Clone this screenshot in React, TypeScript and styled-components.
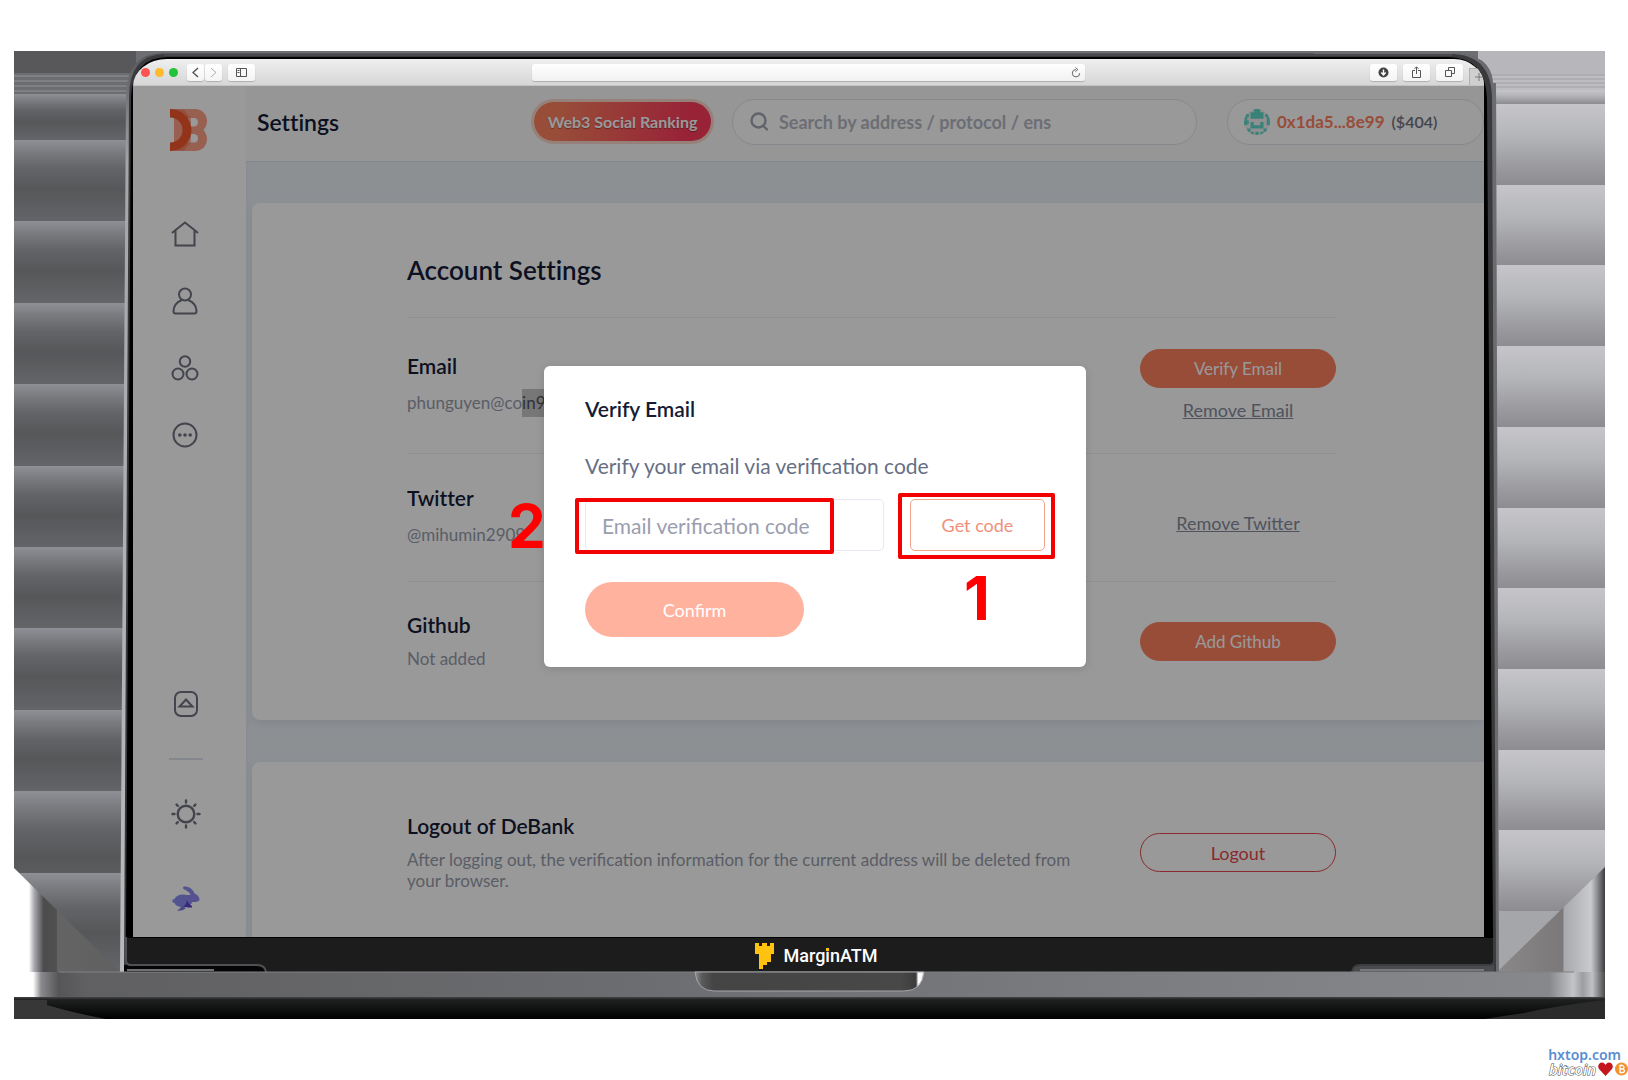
import React from "react";
import styled, { createGlobalStyle, css } from "styled-components";

const GlobalStyle = createGlobalStyle`
  *, *::before, *::after { box-sizing: border-box; }
  body { margin: 0; background: #fff; font-family: Lato, "Liberation Sans", sans-serif; }
  button, input { font: inherit; }
  h1, h2, h3, p { margin: 0; }
  h1, h2, h3 { font-variant-ligatures: none; }
`;

const ink = "#151b36";
const coral = "#fe815f";

const Page = styled.div`
  min-height: 100vh;
  display: flex;
  flex-direction: column;
  padding: 51px 23px 0 14px;
`;

const Laptop = styled.main`
  position: relative;
  flex: 1;
  display: flex;
  flex-direction: column;
  padding: 8px 121px 47px 119px;
`;

const Backdrop = styled.svg`
  position: absolute;
  inset: 0;
  width: 100%;
  height: 100%;
`;

const Screen = styled.div`
  position: relative;
  flex: 1;
  display: flex;
  flex-direction: column;
`;

/* ---------- browser toolbar ---------- */

const Toolbar = styled.div`
  height: 27px;
  display: grid;
  grid-template-columns: 1fr 553px 1fr;
  align-items: center;
  border-radius: 34px 30px 0 0 / 27px 27px 0 0;
  background: linear-gradient(#efefef, #d6d6d6);
  border-bottom: 1px solid #c4c4c4;
  overflow: hidden;
`;

const ToolGroup = styled.div<{ $end?: boolean }>`
  display: flex;
  align-items: center;
  gap: 6px;
  height: 100%;
  justify-content: ${(p) => (p.$end ? "flex-end" : "flex-start")};
`;

const Lights = styled.div`
  display: flex;
  gap: 5px;
  margin: 0 3px 0 8px;
`;

const Light = styled.span<{ $color: string }>`
  width: 9px;
  height: 9px;
  border-radius: 50%;
  background: ${(p) => p.$color};
`;

const Pair = styled.div`
  display: flex;
  gap: 1px;
`;

const ToolButton = styled.button<{ $narrow?: boolean }>`
  width: ${(p) => (p.$narrow ? 17 : 27)}px;
  height: 17px;
  padding: 0;
  display: grid;
  place-items: center;
  border: 0;
  border-radius: 3px;
  background: linear-gradient(#fff, #f4f4f4);
  box-shadow: 0 1px 1px rgba(0, 0, 0, 0.2);
  color: #555;
`;

const UrlBar = styled.div`
  height: 17px;
  display: flex;
  align-items: center;
  border-radius: 3px;
  background: linear-gradient(#fff, #f1f1f1);
  box-shadow: 0 1px 1px rgba(0, 0, 0, 0.2);
  padding-right: 4px;
`;

const UrlInput = styled.input`
  flex: 1;
  min-width: 0;
  height: 15px;
  border: 0;
  background: transparent;
  font-size: 11px;
`;

const ReloadButton = styled.button`
  display: grid;
  padding: 0;
  border: 0;
  background: none;
`;

const NewTab = styled.button`
  align-self: flex-end;
  width: 15px;
  height: 17px;
  padding: 0;
  border: solid #b0b0b0;
  border-width: 1px 0 0 1px;
  background: #cfcfcf;
  display: grid;
  place-items: center end;
`;

/* ---------- application ---------- */

const AppArea = styled.div`
  position: relative;
  flex: 1;
  display: flex;
  overflow: hidden;
  background: #ebf0f6;
`;

const Sidebar = styled.nav`
  width: 113px;
  flex: none;
  display: flex;
  flex-direction: column;
  align-items: center;
  padding: 23px 10px 25px 0;
  background: #fff;
  box-shadow: 0 0 6px rgba(60, 70, 110, 0.08);
`;

const LogoLink = styled.a`
  display: grid;
  margin: 0 0 69px 8px;
`;

const NavList = styled.div`
  display: flex;
  flex-direction: column;
  gap: 39px;
`;

const IconButton = styled.button`
  display: grid;
  place-items: center;
  width: 32px;
  height: 28px;
  padding: 0;
  border: 0;
  background: none;
  color: #707280;
`;

const NavBottom = styled.div`
  display: flex;
  flex-direction: column;
  align-items: center;
  margin-top: auto;
  padding-left: 2px;
`;

const NavRule = styled.hr`
  width: 34px;
  height: 2px;
  margin: 40px 0 39px;
  border: 0;
  background: #dde2ec;
`;

const Spacer = styled.div`
  height: 57px;
`;

const Main = styled.div`
  flex: 1;
  min-width: 0;
  display: flex;
  flex-direction: column;
`;

const Header = styled.header`
  display: flex;
  align-items: center;
  height: 76px;
  flex: none;
  padding: 0 0 4px 11px;
  background: #f9fbf9;
  border-bottom: 1px solid #dde1ea;
`;

const PageTitle = styled.h1`
  flex: 1;
  font-size: 23px;
  line-height: 28px;
  font-weight: 600;
  color: ${ink};
`;

const RankingButton = styled.button`
  width: 177px;
  height: 39px;
  margin-right: 21px;
  padding: 0;
  border: 0;
  border-radius: 20px;
  background: linear-gradient(100deg, ${coral} 15%, #fe3b5c 85%);
  box-shadow: 0 0 0 3px rgba(254, 129, 95, 0.3);
  color: #fff;
  font-size: 16px;
  font-weight: 700;
  text-shadow: 0 1px 1px rgba(0, 0, 0, 0.35);
  white-space: nowrap;
`;

const SearchBox = styled.label`
  display: flex;
  align-items: center;
  gap: 10px;
  width: 465px;
  height: 46px;
  margin-right: 30px;
  padding: 0 17px;
  border: 1px solid #dfe3ec;
  border-radius: 23px;
  background: #fff;
  color: #a0a5b4;
`;

const SearchInput = styled.input`
  flex: 1;
  min-width: 0;
  padding: 0;
  border: 0;
  background: none;
  font-size: 18px;
  font-weight: 700;
  &::placeholder { color: #b4b8c4; opacity: 1; }
`;

const Account = styled.button`
  display: flex;
  align-items: center;
  width: 257px;
  height: 46px;
  padding: 0 16px;
  gap: 7px;
  border: 1px solid #dfe3ec;
  border-radius: 23px;
  background: #fff;
`;

const Address = styled.span`
  color: ${coral};
  font-size: 17px;
  font-weight: 700;
`;

const Balance = styled.span`
  color: #707280;
  font-size: 16px;
  font-weight: 600;
`;

const Content = styled.div`
  flex: 1;
  display: flex;
  flex-direction: column;
  gap: 42px;
  padding: 41px 0 0 6px;
`;

const Card = styled.section<{ $last?: boolean }>`
  padding: ${(p) => (p.$last ? 50 : 49)}px 148px 0 155px;
  background: #fff;
  border-radius: ${(p) => (p.$last ? "8px 0 0 0" : "8px 0 0 8px")};
  box-shadow: 0 3px 8px rgba(60, 70, 110, 0.1);
  ${(p) => p.$last && css`flex: 1;`}
`;

const CardTitle = styled.h2`
  padding-bottom: 29px;
  border-bottom: 1px solid #eff0f4;
  font-size: 26px;
  line-height: 36px;
  font-weight: 600;
  color: ${ink};
`;

const Row = styled.div<{ $bottom?: number; $line?: boolean }>`
  display: flex;
  justify-content: space-between;
  padding-bottom: ${(p) => p.$bottom ?? 0}px;
  border-bottom: ${(p) => (p.$line ? "1px solid #eff0f4" : "0")};
`;

const Info = styled.div<{ $top?: number; $gap?: number }>`
  display: flex;
  flex-direction: column;
  gap: ${(p) => p.$gap ?? 11}px;
  padding-top: ${(p) => p.$top ?? 0}px;
`;

const RowTitle = styled.h3`
  font-size: 21px;
  line-height: 28px;
  font-weight: 600;
  color: ${ink};
`;

const RowText = styled.p<{ $tight?: boolean }>`
  max-width: 680px;
  font-size: 17px;
  line-height: ${(p) => (p.$tight ? 21 : 24)}px;
  color: #969cab;
`;

const Selected = styled.span`
  display: inline-block;
  margin: -2px 0;
  padding: 2px 0;
  background: #c6c6c6;
  color: #50525c;
`;

const Actions = styled.div<{ $top: number }>`
  display: flex;
  flex-direction: column;
  align-items: center;
  gap: 10px;
  width: 196px;
  padding-top: ${(p) => p.$top}px;
`;

const PillButton = styled.button<{ $outline?: boolean }>`
  width: 100%;
  height: 39px;
  padding: 0;
  border: 1px solid ${(p) => (p.$outline ? "#e5484d" : coral)};
  border-radius: 20px;
  background: ${(p) => (p.$outline ? "transparent" : coral)};
  color: ${(p) => (p.$outline ? "#e5484d" : "#fff")};
  font-size: ${(p) => (p.$outline ? 18 : 17)}px;
`;

const TextLink = styled.a`
  font-size: 18px;
  line-height: 24px;
  color: #858b9b;
  text-decoration: underline;
`;

/* ---------- dialog ---------- */

const Overlay = styled.div`
  position: absolute;
  inset: 0;
  display: flex;
  align-items: center;
  justify-content: center;
  padding: 10px 0 0 13px;
  background: rgba(0, 0, 0, 0.4);
`;

const Dialog = styled.form`
  position: relative;
  width: 542px;
  padding: 29px 41px 30px;
  border-radius: 6px;
  background: #fff;
  box-shadow: 0 2px 10px rgba(0, 0, 0, 0.12);
`;

const DialogTitle = styled.h2`
  font-size: 21px;
  line-height: 28px;
  font-weight: 600;
  color: ${ink};
`;

const DialogLabel = styled.label`
  display: block;
  margin: 29px 0 19px;
  font-size: 21px;
  line-height: 28px;
  color: #666f85;
`;

const CodeRow = styled.div`
  display: flex;
  gap: 26px;
  margin-bottom: 31px;
`;

const CodeInput = styled.input`
  flex: 1;
  min-width: 0;
  height: 52px;
  padding: 0 16px;
  border: 1px solid #e8e9f1;
  border-radius: 5px;
  background: #fff;
  font-size: 21px;
  &::placeholder { color: #9a9eae; opacity: 1; }
`;

const CodeButton = styled.button`
  width: 135px;
  height: 52px;
  padding: 0;
  border: 1px solid #f3a38c;
  border-radius: 5px;
  background: #fff;
  color: #f0907a;
  font-size: 18px;
`;

const ConfirmButton = styled.button`
  display: block;
  width: 219px;
  height: 55px;
  padding: 0;
  border: 0;
  border-radius: 28px;
  background: #ffb39f;
  color: #fff;
  font-size: 18px;
`;

const Marker = styled.span<{ $x: number; $y: number; $w: number; $h: number }>`
  position: absolute;
  left: ${(p) => p.$x}px;
  top: ${(p) => p.$y}px;
  width: ${(p) => p.$w}px;
  height: ${(p) => p.$h}px;
  border: 4px solid #f30000;
  border-radius: 2px;
  pointer-events: none;
`;

const Step = styled.span<{ $x: number; $y: number }>`
  position: absolute;
  left: ${(p) => p.$x}px;
  top: ${(p) => p.$y}px;
  color: #f00;
  font: 700 60px/44px Inter, sans-serif;
  pointer-events: none;
`;

/* ---------- bottom ---------- */

const BrandBar = styled.div`
  position: relative;
  display: flex;
  align-items: center;
  justify-content: center;
  gap: 9px;
  height: 35px;
  padding: 3px 0 0 16px;
`;

const BrandName = styled.span`
  color: #fff;
  font: 500 18px/24px Roboto, sans-serif;
`;

const DottedI = styled.span`
  position: relative;
  &::before {
    content: "";
    position: absolute;
    left: 1px;
    top: 3px;
    width: 3px;
    height: 3px;
    background: #ffc20e;
  }
`;

const Footer = styled.footer`
  display: flex;
  flex-direction: column;
  align-items: flex-end;
  height: 61px;
  margin-right: -23px;
  padding-top: 27px;
`;

const Site = styled.a`
  padding-right: 7px;
  color: #5a8dd0;
  font: 600 14px/17px "Noto Sans", sans-serif;
  text-decoration: none;
`;

const Credit = styled.div`
  display: flex;
  align-items: center;
  gap: 2px;
  height: 12px;
`;

const CreditText = styled.span`
  color: #fff;
  font: italic 600 15px/12px "Open Sans", sans-serif;
  -webkit-text-stroke: 1px #444;
  paint-order: stroke fill;
`;

/* ---------- drawings ---------- */

const leftStops = Array.from({ length: 9 }, (_, i) => 89 + Math.round(i * 81.4));
const rightStops = Array.from({ length: 10 }, (_, i) => 53 + Math.round(i * 80.7));

const LaptopDrawing = () => (
  <Backdrop viewBox="0 0 1591 968" preserveAspectRatio="none" aria-hidden="true">
    <defs>
      <linearGradient id="ls" x1="0" y1="0" x2="0" y2="1">
        <stop offset="0" stopColor="#8f9095" />
        <stop offset=".15" stopColor="#7a7b7f" />
        <stop offset=".35" stopColor="#636467" />
        <stop offset=".6" stopColor="#565759" />
        <stop offset="1" stopColor="#646568" />
      </linearGradient>
      <linearGradient id="rs" x1="0" y1="0" x2="0" y2="1">
        <stop offset="0" stopColor="#c5c5ca" />
        <stop offset=".4" stopColor="#b4b5b9" />
        <stop offset=".8" stopColor="#99999d" />
        <stop offset="1" stopColor="#8d8d91" />
      </linearGradient>
      <linearGradient id="base" x1="0" x2="1">
        <stop offset="0" stopColor="#fff" />
        <stop offset=".012" stopColor="#fff" />
        <stop offset=".017" stopColor="#8a8a8e" />
        <stop offset=".028" stopColor="#565658" />
        <stop offset=".045" stopColor="#606062" />
        <stop offset=".4" stopColor="#6c6d70" />
        <stop offset=".75" stopColor="#7e7f83" />
        <stop offset=".965" stopColor="#87888b" />
        <stop offset=".98" stopColor="#c3c4c8" />
        <stop offset=".986" stopColor="#9c9da1" />
        <stop offset=".992" stopColor="#c0c1c5" />
        <stop offset="1" stopColor="#4a4a4c" />
      </linearGradient>
      <linearGradient id="under" x1="0" y1="0" x2="0" y2="1">
        <stop offset="0" stopColor="#444546" />
        <stop offset=".12" stopColor="#1f2020" />
        <stop offset="1" stopColor="#000" />
      </linearGradient>
      <linearGradient id="lt" gradientUnits="userSpaceOnUse" x1="0" x2="106" y1="0" y2="0">
        <stop offset="0" stopColor="#fff" />
        <stop offset=".14" stopColor="#fff" />
        <stop offset=".19" stopColor="#a9a9b0" />
        <stop offset=".28" stopColor="#4c4c4e" />
        <stop offset=".4" stopColor="#505050" />
        <stop offset=".41" stopColor="#646464" />
        <stop offset="1" stopColor="#606060" />
      </linearGradient>
      <linearGradient id="rt" gradientUnits="userSpaceOnUse" x1="1483" x2="1591" y1="0" y2="0">
        <stop offset="0" stopColor="#8a8888" />
        <stop offset=".61" stopColor="#7a7878" />
        <stop offset=".62" stopColor="#a8a9ad" />
        <stop offset=".87" stopColor="#c9cace" />
        <stop offset=".93" stopColor="#8b8c90" />
        <stop offset="1" stopColor="#3c3c3e" />
      </linearGradient>
      <linearGradient id="notch" x1="0" x2="1">
        <stop offset="0" stopColor="#8c8d8f" />
        <stop offset=".03" stopColor="#5a5a5a" />
        <stop offset=".08" stopColor="#444" />
        <stop offset=".9" stopColor="#484848" />
        <stop offset=".965" stopColor="#3c3c3c" />
        <stop offset=".975" stopColor="#fff" />
        <stop offset="1" stopColor="#eee" />
      </linearGradient>
      <linearGradient id="edgeL" x1="0" y1="0" x2="0" y2="1">
        <stop offset="0" stopColor="#55565a" />
        <stop offset=".12" stopColor="#a4a6ab" />
        <stop offset="1" stopColor="#b8babe" />
      </linearGradient>
    </defs>

    <rect width="1591" height="968" fill="#6d6e71" />
    <rect width="122" height="22" fill="#58585a" />
    <rect y="22" width="120" height="21" fill="#6c6d70" />
    <path d="M0 25H118M0 30H118M0 35H118M0 40H118" stroke="#939499" strokeWidth="1" />
    <rect y="43" width="120" height="46" fill="url(#ls)" />
    {leftStops.map((y, i) => (
      <rect key={y} y={y} width="120" height={i === 8 ? 110 : 82} fill="url(#ls)" />
    ))}
    <rect y="822" width="120" height="99" fill="url(#ls)" />

    <rect x="1464" width="127" height="24" fill="#b7b7bb" />
    <rect x="1464" y="24" width="127" height="15" fill="#bdbdc1" />
    <path d="M1470 24H1591M1470 28H1591M1470 32H1591M1470 36H1591" stroke="#a0a1a5" strokeWidth="1" />
    <rect x="1464" y="39" width="127" height="14" fill="url(#rs)" />
    {rightStops.map((y) => (
      <rect key={y} x="1464" y={y} width="127" height="81" fill="url(#rs)" />
    ))}
    <rect x="1464" y="860" width="127" height="61" fill="#a5a6aa" />

    <path d="M0 817L106 921H0Z" fill="url(#lt)" />
    <path d="M1591 816L1483 921H1591Z" fill="url(#rt)" />

    <path d="M106 921L112 45Q112 2 150 2H1436Q1477 2 1479 32H1482L1485 921Z" fill="url(#edgeL)" />
    <path d="M1300 2H1436Q1477 2 1479 32H1482L1485 921H1300Z" fill="#6b6c70" />
    <path d="M110 921L115 46Q115 3 152 3H1436Q1478 3 1478 48L1482 921Z" fill="#3a3a3c" />
    <path d="M112 886L117 46Q119 6 154 6H1434Q1472 6 1473 48L1479 886Z" fill="#000" />
    <path d="M150 4H1438" stroke="#58595b" strokeWidth="1" />
    <rect x="112" y="888" width="1367" height="33" fill="#1c1c1c" />
    <path d="M112 886H1479" stroke="#000" strokeWidth="3" />
    <path d="M110 914H243Q251 914 252 921H110Z" fill="#050505" />
    <path d="M112 886V909Q112 914 117 914H243Q251 914 252 921" fill="none" stroke="#505154" strokeWidth="2" />
    <path d="M113 919H200" stroke="#707175" strokeWidth="2" />
    <path d="M1480 914H1346Q1339 914 1338 921H1480Z" fill="#4a4b4e" />
    <path d="M1480 886V909Q1480 914 1475 914H1346Q1339 914 1338 921" fill="none" stroke="#3c3d3f" strokeWidth="2" />
    <path d="M1346 919H1470" stroke="#77787c" strokeWidth="2" />

    <rect y="921" width="1591" height="25" fill="url(#base)" />
    <path d="M45 921H1560" stroke="#808184" strokeWidth="1" />
    <rect y="946" width="1591" height="22" fill="url(#under)" />
    <path d="M0 949H33V954Q60 962 92 968H0Z" fill="#373738" />
    <path d="M1591 949Q1540 955 1510 962L1470 968H1591Z" fill="#2b2b2c" />
    <path d="M681 921H910Q908 940 890 940H700Q683 940 681 921Z" fill="url(#notch)" stroke="#a5a6a9" strokeWidth="1" />
  </Backdrop>
);

const Logo = () => (
  <svg width="38" height="42" viewBox="0 0 38 42" aria-hidden="true">
    <path
      fill="#fe815f"
      fillOpacity=".75"
      fillRule="evenodd"
      d="M4 0H25C32 0 37 5 37 12C37 15.500 35.500 18.500 33.500 21C35.500 23.500 37 26.500 37 30C37 37 32 42 25 42H4ZM17 9H25Q28 10 28 13Q28 17 24 17.500H20ZM20 25H24Q28 25.500 28 29Q28 33 25 33.500H17Z"
    />
    <path fill="#f4572c" d="M0 0C12 0 21.500 9 21.500 21S12 42 0 42V33.500C7 33.500 12.500 28 12.500 21S7 8.500 0 8.500Z" />
    <path fill="#e8694a" fillOpacity=".5" d="M5 0.500H14L21 9.500V17C19 8 13 2 5 .5ZM5 41.500H14L21 33V25C19 34 13 40 5 41.500Z" />
  </svg>
);

const line = { fill: "none", stroke: "currentColor", strokeWidth: 2, strokeLinecap: "round", strokeLinejoin: "round" } as const;

const HomeIcon = () => (
  <svg width="28" height="26" viewBox="0 0 28 26" {...line}>
    <path d="M1.500 11.500L14 1.500L26.500 11.500M4.500 9.500V24.500H23.500V9.500" strokeLinejoin="miter" />
  </svg>
);
const UserIcon = () => (
  <svg width="26" height="28" viewBox="0 0 26 28" {...line}>
    <circle cx="13" cy="7.500" r="6" />
    <path d="M9 13.500C4.500 15 1.500 19.500 1.500 24Q1.500 26.500 3.500 26.500H22.500Q24.500 26.500 24.500 24C24.500 19.500 21.500 15 17 13.500" />
  </svg>
);
const GroupIcon = () => (
  <svg width="28" height="26" viewBox="0 0 28 26" {...line}>
    <circle cx="14" cy="6.500" r="5.200" />
    <circle cx="7" cy="19" r="5.500" />
    <circle cx="21" cy="19" r="5.500" />
  </svg>
);
const MoreIcon = () => (
  <svg width="26" height="26" viewBox="0 0 26 26" {...line}>
    <circle cx="13" cy="13" r="11.500" />
    <g fill="currentColor" stroke="none">
      <circle cx="7.800" cy="13" r="1.800" />
      <circle cx="13" cy="13" r="1.800" />
      <circle cx="18.200" cy="13" r="1.800" />
    </g>
  </svg>
);
const BoxIcon = () => (
  <svg width="26" height="26" viewBox="0 0 26 26" {...line}>
    <rect x="2" y="1" width="22" height="24" rx="6" />
    <path d="M6.500 15.500H19.500L13 8.500Z" strokeLinejoin="miter" />
  </svg>
);
const SunIcon = () => (
  <svg width="30" height="30" viewBox="0 0 30 30" {...line} strokeWidth="2.400">
    <circle cx="15" cy="15" r="8.300" />
    <path d="M15 1.500V3.500M15 26.500V28.500M1.500 15H3.500M26.500 15H28.500M5.500 5.500L6.800 6.800M23.200 23.200L24.500 24.500M24.500 5.500L23.200 6.800M6.800 23.200L5.500 24.500" />
  </svg>
);
const RabbitIcon = () => (
  <svg width="28" height="25" viewBox="0 0 28 25">
    <defs>
      <linearGradient id="rabbit" x1="0" y1="0" x2="1" y2=".3">
        <stop offset="0" stopColor="#8390f2" />
        <stop offset="1" stopColor="#9287ee" />
      </linearGradient>
    </defs>
    <path fill="#7d7ce0" d="M5 24.500C7 24 8 22 10 20L14 22C11 25 7 25 5 24.500Z" />
    <path
      fill="url(#rabbit)"
      d="M11.500 .8C16 -.3 21 3 22.500 7.500C25.500 8.500 27.800 11.500 27.500 14C26.500 16 23 16 20.500 16C19 18 18 19.500 16 21L9 21C5 20.500 3 18.500 2.500 17C.5 17 0 15.500 .5 14C1 13 2 13 2.500 13C4 9.500 8 8 12 8.500C15 9 16.500 9.500 18.500 8.500C17 5.500 14 4.500 11.500 3Q10.500 1.500 11.500 .8Z"
    />
    <path fill="#5a42cf" d="M11 20.500C13.500 19.500 15 17 14.500 14C16 16 17 18.500 20 20V21.500C18 21.500 15 21.500 11 20.500Z" />
  </svg>
);
const SearchIcon = () => (
  <svg width="19" height="19" viewBox="0 0 19 19" {...line} strokeWidth="2.400">
    <circle cx="8.500" cy="8.500" r="7" />
    <path d="M13.500 14L17 17.500" />
  </svg>
);
const Avatar = () => (
  <svg width="26" height="26" viewBox="0 0 16 16" aria-hidden="true">
    <clipPath id="round"><circle cx="8" cy="8" r="8" /></clipPath>
    <g clipPath="url(#round)">
      <rect width="16" height="16" fill="#f0f1f4" />
      <path
        fill="#62d8c9"
        d="M6 0H10V2H12V6H4V2H6ZM0 7H2V10H0ZM14 7H16V10H14ZM4 8H6V10H10V8H12V12H4ZM1 3H3V5H1ZM13 3H15V5H13ZM2 12H4V14H2ZM12 12H14V14H12ZM4 14H6V16H4ZM7 14H9V16H7ZM10 14H12V16H10ZM0 5H2V7H3V9H1ZM14 5H16V9H14Z"
      />
    </g>
  </svg>
);
const BrandMark = () => (
  <svg width="19" height="26" viewBox="0 0 19 26" aria-hidden="true">
    <path fill="#ffc20e" d="M0 0H4V3H7V0H12V3H15V0H19V11H16V19H12V22H8V26H4V11H0Z" />
  </svg>
);

const tiny = { fill: "none", stroke: "currentColor", strokeWidth: 1 } as const;

export default function App() {
  return (
    <Page>
      <GlobalStyle />
      <Laptop>
        <LaptopDrawing />
        <Screen>
          <Toolbar>
            <ToolGroup>
              <Lights>
                <Light $color="#fc5551" />
                <Light $color="#fdbb2c" />
                <Light $color="#22c33b" />
              </Lights>
              <Pair>
                <ToolButton $narrow aria-label="Back">
                  <svg width="7" height="11" viewBox="0 0 7 11" {...tiny} strokeWidth="1.500"><path d="M6 1L1 5.500L6 10" /></svg>
                </ToolButton>
                <ToolButton $narrow aria-label="Forward">
                  <svg width="7" height="11" viewBox="0 0 7 11" {...tiny} stroke="#aaa"><path d="M1 1L6 5.500L1 10" /></svg>
                </ToolButton>
              </Pair>
              <ToolButton aria-label="Sidebar">
                <svg width="11" height="9" viewBox="0 0 11 9" {...tiny}><path d="M.5 .5H10.500V8.500H.5ZM4.500 .5V8.500M1.500 2.500H3.500M1.500 4.500H3.500" /></svg>
              </ToolButton>
            </ToolGroup>
            <UrlBar>
              <UrlInput aria-label="Address" />
              <ReloadButton aria-label="Reload">
                <svg width="10" height="11" viewBox="0 0 10 11" {...tiny} stroke="#666"><path d="M5 2.500A3.700 3.700 0 1 0 8.700 6.200M4.500 .5L6.800 2.500L4.500 4.500" /></svg>
              </ReloadButton>
            </UrlBar>
            <ToolGroup $end>
              <ToolButton aria-label="Downloads">
                <svg width="11" height="11" viewBox="0 0 11 11"><circle cx="5.500" cy="5.500" r="5" fill="#444" /><path d="M5.500 2.500V7.500M3.300 5.500L5.500 8L7.700 5.500" fill="none" stroke="#fff" strokeWidth="1.400" /></svg>
              </ToolButton>
              <ToolButton aria-label="Share">
                <svg width="9" height="12" viewBox="0 0 9 12" {...tiny}><path d="M3 4.500H.5V11.500H8.500V4.500H6M4.500 8V1M2.500 2.800L4.500 .8L6.500 2.800" /></svg>
              </ToolButton>
              <ToolButton aria-label="Tabs">
                <svg width="10" height="10" viewBox="0 0 10 10" {...tiny}><path d="M.5 3.500H6.500V9.500H.5ZM3.500 3.500V.5H9.500V6.500H6.500" /></svg>
              </ToolButton>
              <NewTab aria-label="New tab">
                <svg width="10" height="10" viewBox="0 0 10 10" {...tiny} stroke="#777"><path d="M5 1V9M1 5H9" /></svg>
              </NewTab>
            </ToolGroup>
          </Toolbar>

          <AppArea>
            <Sidebar>
              <LogoLink href="#" aria-label="DeBank"><Logo /></LogoLink>
              <NavList>
                <IconButton aria-label="Home"><HomeIcon /></IconButton>
                <IconButton aria-label="Profile"><UserIcon /></IconButton>
                <IconButton aria-label="Groups"><GroupIcon /></IconButton>
                <IconButton aria-label="More"><MoreIcon /></IconButton>
              </NavList>
              <NavBottom>
                <IconButton aria-label="Upgrade"><BoxIcon /></IconButton>
                <NavRule />
                <IconButton aria-label="Theme"><SunIcon /></IconButton>
                <Spacer />
                <IconButton aria-label="Rabby"><RabbitIcon /></IconButton>
              </NavBottom>
            </Sidebar>

            <Main>
              <Header>
                <PageTitle>Settings</PageTitle>
                <RankingButton>Web3 Social Ranking</RankingButton>
                <SearchBox>
                  <SearchIcon />
                  <SearchInput aria-label="Search" placeholder="Search by address / protocol / ens" />
                </SearchBox>
                <Account>
                  <Avatar />
                  <Address>0x1da5...8e99</Address>
                  <Balance>($404)</Balance>
                </Account>
              </Header>

              <Content>
                <Card>
                  <CardTitle>Account Settings</CardTitle>
                  <Row $line $bottom={31}>
                    <Info $top={34}>
                      <RowTitle>Email</RowTitle>
                      <RowText>phunguyen@co<Selected>in98</Selected></RowText>
                    </Info>
                    <Actions $top={31}>
                      <PillButton>Verify Email</PillButton>
                      <TextLink href="#">Remove Email</TextLink>
                    </Actions>
                  </Row>
                  <Row $line $bottom={34}>
                    <Info $top={30}>
                      <RowTitle>Twitter</RowTitle>
                      <RowText>@mihumin2909</RowText>
                    </Info>
                    <Actions $top={57}>
                      <TextLink href="#">Remove Twitter</TextLink>
                    </Actions>
                  </Row>
                  <Row $bottom={49}>
                    <Info $top={29} $gap={8}>
                      <RowTitle>Github</RowTitle>
                      <RowText>Not added</RowText>
                    </Info>
                    <Actions $top={40}>
                      <PillButton>Add Github</PillButton>
                    </Actions>
                  </Row>
                </Card>

                <Card $last>
                  <Row>
                    <Info $gap={9}>
                      <RowTitle>Logout of DeBank</RowTitle>
                      <RowText $tight>
                        After logging out, the verification information for the current address will be deleted from your browser.
                      </RowText>
                    </Info>
                    <Actions $top={21}>
                      <PillButton $outline>Logout</PillButton>
                    </Actions>
                  </Row>
                </Card>
              </Content>
            </Main>

            <Overlay>
              <Dialog onSubmit={(e) => e.preventDefault()}>
                <DialogTitle>Verify Email</DialogTitle>
                <DialogLabel htmlFor="code">Verify your email via verification code</DialogLabel>
                <CodeRow>
                  <CodeInput id="code" placeholder="Email verification code" />
                  <CodeButton type="button">Get code</CodeButton>
                </CodeRow>
                <ConfirmButton type="submit">Confirm</ConfirmButton>
                <Marker $x={31} $y={132} $w={259} $h={56} />
                <Marker $x={354} $y={127} $w={157} $h={66} />
                <Step $x={-36} $y={138}>2</Step>
                <Step $x={420} $y={210}>1</Step>
              </Dialog>
            </Overlay>
          </AppArea>
        </Screen>
        <BrandBar>
          <BrandMark />
          <BrandName>Marg<DottedI>i</DottedI>nATM</BrandName>
        </BrandBar>
      </Laptop>
      <Footer>
        <Site href="#">hxtop.com</Site>
        <Credit>
          <CreditText>bitcoin</CreditText>
          <svg width="15" height="14" viewBox="0 0 15 14"><path fill="#c3171d" d="M7.500 14L1 7C-1 4 1 .5 4 .5C6 .5 7 2 7.500 3C8 2 9 .5 11 .5C14 .5 16 4 14 7Z" /></svg>
          <svg width="13" height="14" viewBox="0 0 13 14"><circle cx="6.500" cy="7" r="6.500" fill="#f2922e" /><path d="M5 3.500H7.500Q9 4 9 5.300T7.500 7H5ZM5 7H8Q9.500 7.500 9.500 8.800T8 10.500H5ZM6.500 2.500V3.500M6.500 10.500V11.500" fill="none" stroke="#fff" strokeWidth="1.300" /></svg>
        </Credit>
      </Footer>
    </Page>
  );
}
